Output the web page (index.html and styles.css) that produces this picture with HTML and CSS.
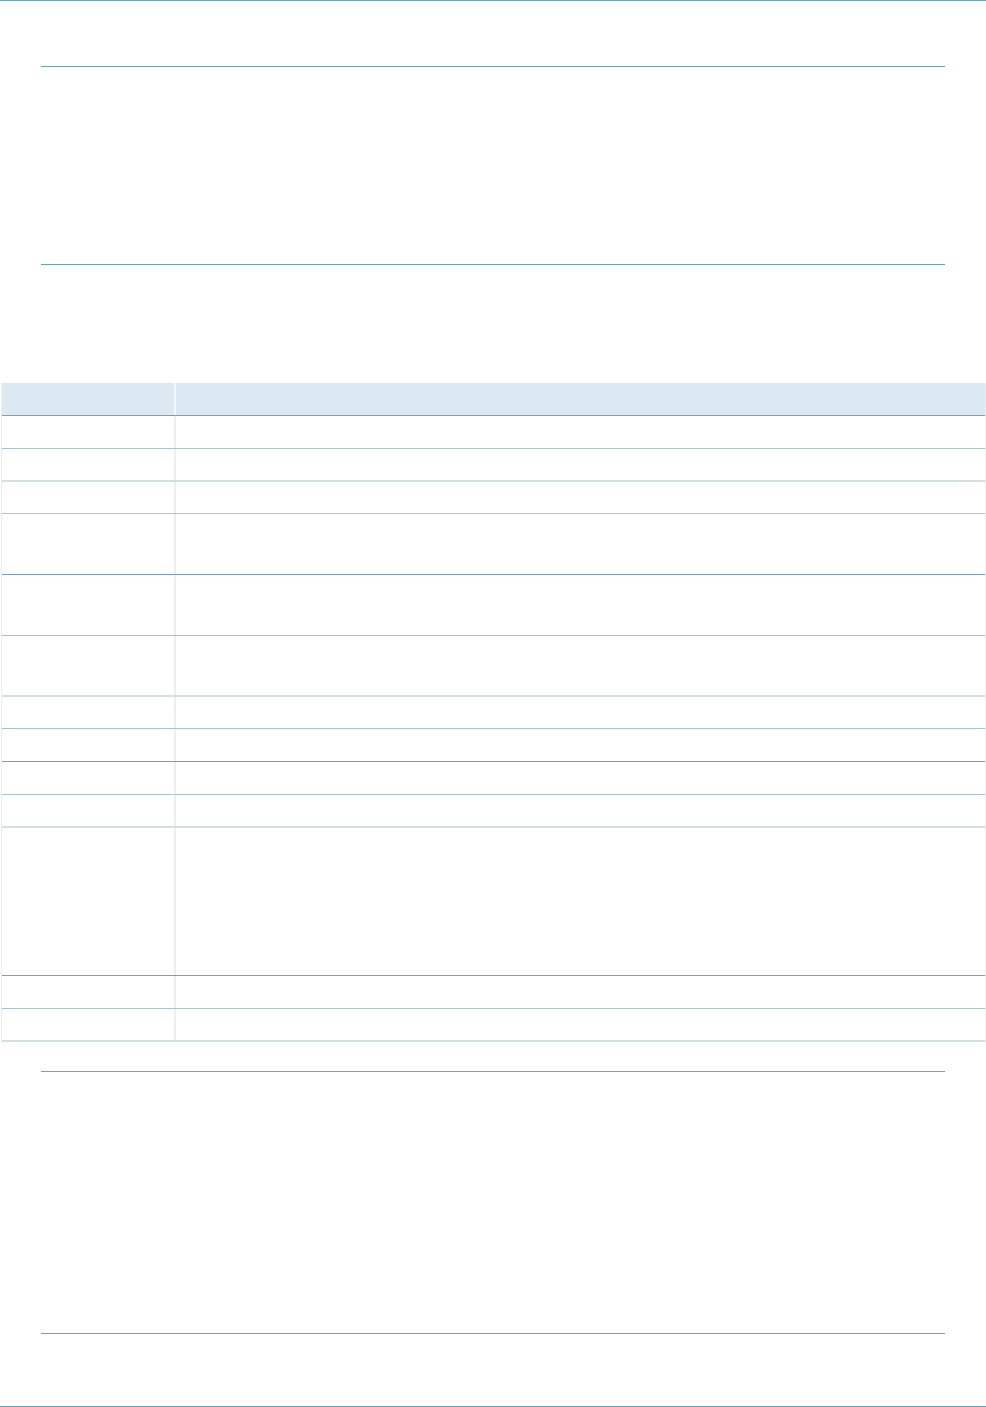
FILE: index.html
```html
<!DOCTYPE html>
<html lang="en">
<head>
    <meta charset="UTF-8">
    <meta name="viewport" content="width=device-width, initial-scale=1.0">
    <title>Document</title>
    <link rel="stylesheet" href="styles.css">
</head>
<body>
    <div class="page">
        <div class="intro"></div>

        <div class="grid">
            <div class="row head"><div class="cell key"></div><div class="cell val"></div></div>
            <div class="row h33 mid"><div class="cell key"></div><div class="cell val"></div></div>
            <div class="row h33 light"><div class="cell key"></div><div class="cell val"></div></div>
            <div class="row h32 mid"><div class="cell key"></div><div class="cell val"></div></div>
            <div class="row h61 dark"><div class="cell key"></div><div class="cell val"></div></div>
            <div class="row h61 grey"><div class="cell key"></div><div class="cell val"></div></div>
            <div class="row h61 light"><div class="cell key"></div><div class="cell val"></div></div>
            <div class="row h32 mid"><div class="cell key"></div><div class="cell val"></div></div>
            <div class="row h33 dark"><div class="cell key"></div><div class="cell val"></div></div>
            <div class="row h33 mid"><div class="cell key"></div><div class="cell val"></div></div>
            <div class="row h33 light"><div class="cell key"></div><div class="cell val"></div></div>
            <div class="row h148 dark"><div class="cell key"></div><div class="cell val"></div></div>
            <div class="row h33 mid"><div class="cell key"></div><div class="cell val"></div></div>
            <div class="row h33 light"><div class="cell key"></div><div class="cell val"></div></div>
        </div>

        <div class="notes"></div>
    </div>
</body>
</html>
```

FILE: styles.css
```css
body {
    font-family: "Liberation Sans", Arial, sans-serif;
    margin: 0;
    padding: 0;
    background-color: #fff;
}
.page {
    box-sizing: border-box;
    height: 1407px;
    border-top: 1px solid #6f9fb2;
    border-bottom: 1px solid #6f9fb2;
    overflow: hidden;
}
.intro {
    box-sizing: border-box;
    margin: 65px 0 0 41px;
    width: 904px;
    height: 199px;
    border-top: 1px solid #6fa0b1;
    border-bottom: 1px solid #6c9fad;
}
.grid {
    margin: 118px 0 0 1px;
    width: 985px;
    border-left: 1px solid #eceef0;
    border-right: 1px solid #eceef0;
    box-sizing: border-box;
}
.row {
    display: flex;
    box-sizing: border-box;
    border-bottom: 1px solid #a8c3d1;
}
.cell {
    box-sizing: border-box;
}
.key {
    width: 174px;
    border-right: 2px solid #eceef0;
}
.val {
    flex: 1;
}
.head {
    height: 33px;
    background-color: #dde9f2;
    border-bottom-color: #7ba0b6;
}
.head .key {
    border-right-color: #f4f7fa;
}
.h32 { height: 32px; }
.h33 { height: 33px; }
.h61 { height: 61px; }
.h148 { height: 148px; }
.mid { border-bottom-color: #a8c3d1; }
.dark { border-bottom-color: #7ba0b6; }
.grey { border-bottom-color: #a9bdc8; }
.light {
    border-bottom: 2px solid #d2dfe5;
}
.notes {
    box-sizing: border-box;
    margin: 29px 0 0 41px;
    width: 904px;
    height: 263px;
    border-top: 1px solid #7d9db1;
    border-bottom: 1px solid #7d9db1;
}
```
